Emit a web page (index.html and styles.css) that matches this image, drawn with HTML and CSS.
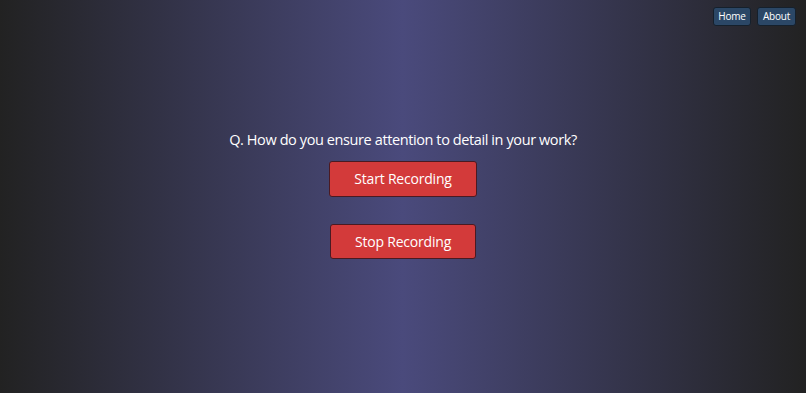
FILE: index.html
```html
<!DOCTYPE html>
<html>
<head>
<meta charset="utf-8">
<link rel="stylesheet" href="styles.css">
</head>
<body>
<nav class="nav">
  <button class="nav-btn">Home</button>
  <button class="nav-btn">About</button>
</nav>
<main class="main">
  <p class="question">Q. How do you ensure attention to detail in your work?</p>
  <button class="rec-btn start">Start Recording</button>
  <button class="rec-btn stop">Stop Recording</button>
</main>
</body>
</html>
```
FILE: styles.css
```css
html, body {
  margin: 0;
  padding: 0;
  height: 100%;
}
body {
  font-family: "Open Sans", "Noto Sans", sans-serif;
  background: linear-gradient(to right, #222222 0%, #4a4a7c 50%, #222222 100%);
  color: #ffffff;
  overflow: hidden;
}
.nav {
  position: absolute;
  top: 7px;
  right: 10px;
  display: flex;
  gap: 6px;
}
.nav-btn {
  font-family: inherit;
  font-size: 10px;
  letter-spacing: -0.2px;
  color: #ffffff;
  background: #2b4766;
  border: 1px solid #15202c;
  border-radius: 3px;
  padding: 2px 0;
  width: 38px;
  height: 19px;
  line-height: 13px;
}
.nav-btn + .nav-btn {
  width: 39px;
}
.main {
  height: 100%;
  box-sizing: border-box;
  padding-bottom: 7px;
  display: flex;
  flex-direction: column;
  align-items: center;
  justify-content: center;
}
.question {
  margin: 2px 0 0;
  font-size: 14.5px;
  letter-spacing: -0.4px;
  line-height: 22px;
}
.rec-btn {
  font-family: inherit;
  font-size: 14px;
  letter-spacing: -0.2px;
  color: #ffffff;
  background: #d33a3a;
  border: 1px solid #4a1a22;
  border-radius: 3px;
  line-height: 20px;
  padding: 7px 0;
}
.start {
  width: 148px;
  height: 36px;
  margin-top: 10px;
}
.stop {
  width: 146px;
  height: 35px;
  margin-top: 27px;
}
```
